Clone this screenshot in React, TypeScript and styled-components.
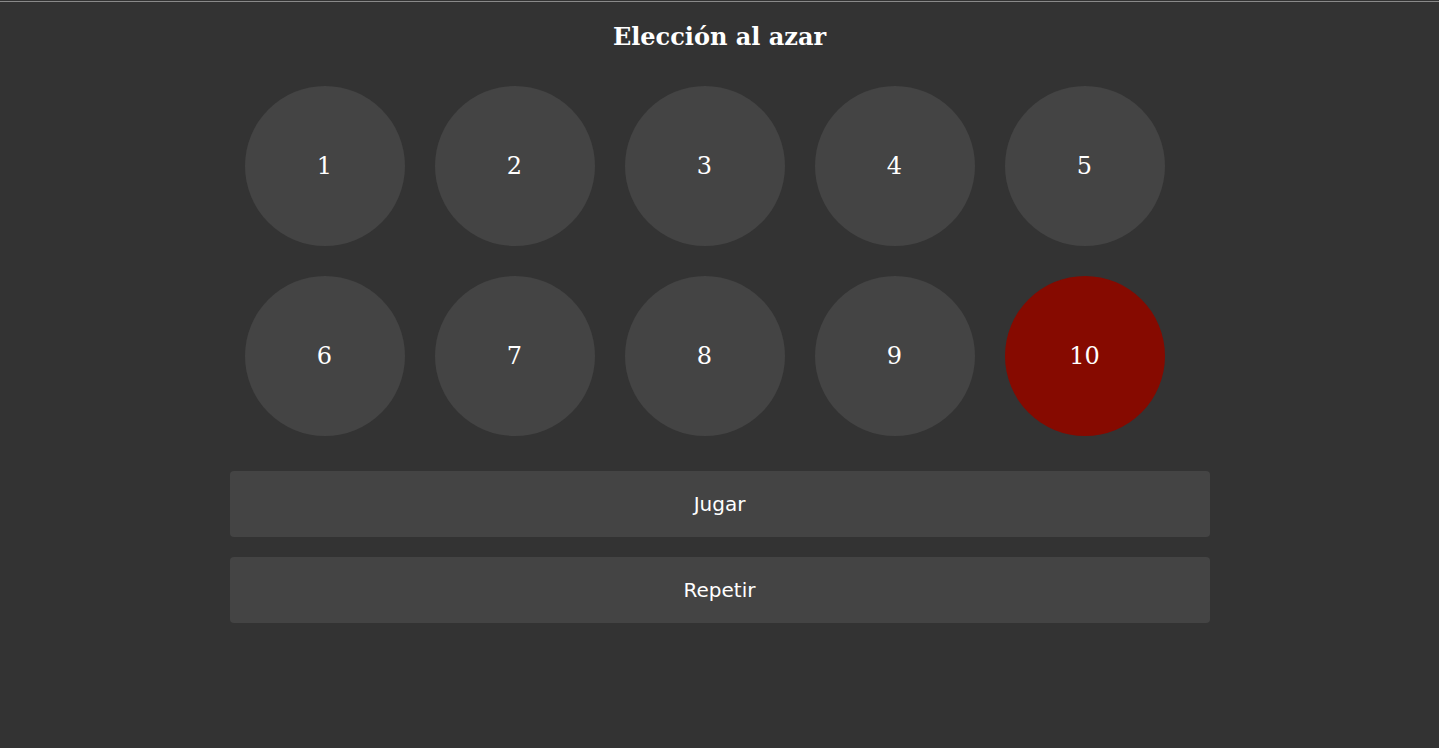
import React from "react";
import styled, { createGlobalStyle } from "styled-components";

const Global = createGlobalStyle`
  html, body { margin: 0; padding: 0; background: #333333; }
  body { font-family: "DejaVu Serif", serif; color: #ffffff; }
`;

const Page = styled.div`
  min-height: 748px;
  box-sizing: border-box;
  border-top: 1px solid #333333;
  background: #333333;
  display: flex;
  flex-direction: column;
  align-items: center;
  &::before {
    content: "";
    display: block;
    align-self: stretch;
    height: 1px;
    background: #8a8a8a;
  }
`;

const Title = styled.h1`
  margin: 0;
  padding-top: 20px;
  height: 69px;
  box-sizing: border-box;
  font-family: "DejaVu Serif", serif;
  font-weight: bold;
  font-size: 24px;
  line-height: 30px;
  text-align: center;
`;

const Board = styled.div`
  width: 980px;
  display: flex;
  flex-direction: column;
`;

const Grid = styled.div`
  display: flex;
  flex-wrap: wrap;
  width: 950px;
`;

const Ball = styled.div<{ $active?: boolean }>`
  width: 160px;
  height: 160px;
  margin: 15px;
  border-radius: 50%;
  background: ${(p) => (p.$active ? "#860a00" : "#444444")};
  display: flex;
  align-items: center;
  justify-content: center;
  font-family: "DejaVu Serif", serif;
  font-size: 24px;
  color: #ffffff;
`;

const Button = styled.button`
  width: 980px;
  height: 66px;
  margin-top: 20px;
  border: none;
  border-radius: 4px;
  background: #444444;
  color: #ffffff;
  font-family: "DejaVu Sans", sans-serif;
  font-size: 20px;
  cursor: pointer;
`;

export default function App() {
  const nums = [1, 2, 3, 4, 5, 6, 7, 8, 9, 10];
  return (
    <Page>
      <Global />
      <Title>Elección al azar</Title>
      <Board>
        <Grid>
          {nums.map((n) => (
            <Ball key={n} $active={n === 10}>
              {n}
            </Ball>
          ))}
        </Grid>
        <Button>Jugar</Button>
        <Button>Repetir</Button>
      </Board>
    </Page>
  );
}
